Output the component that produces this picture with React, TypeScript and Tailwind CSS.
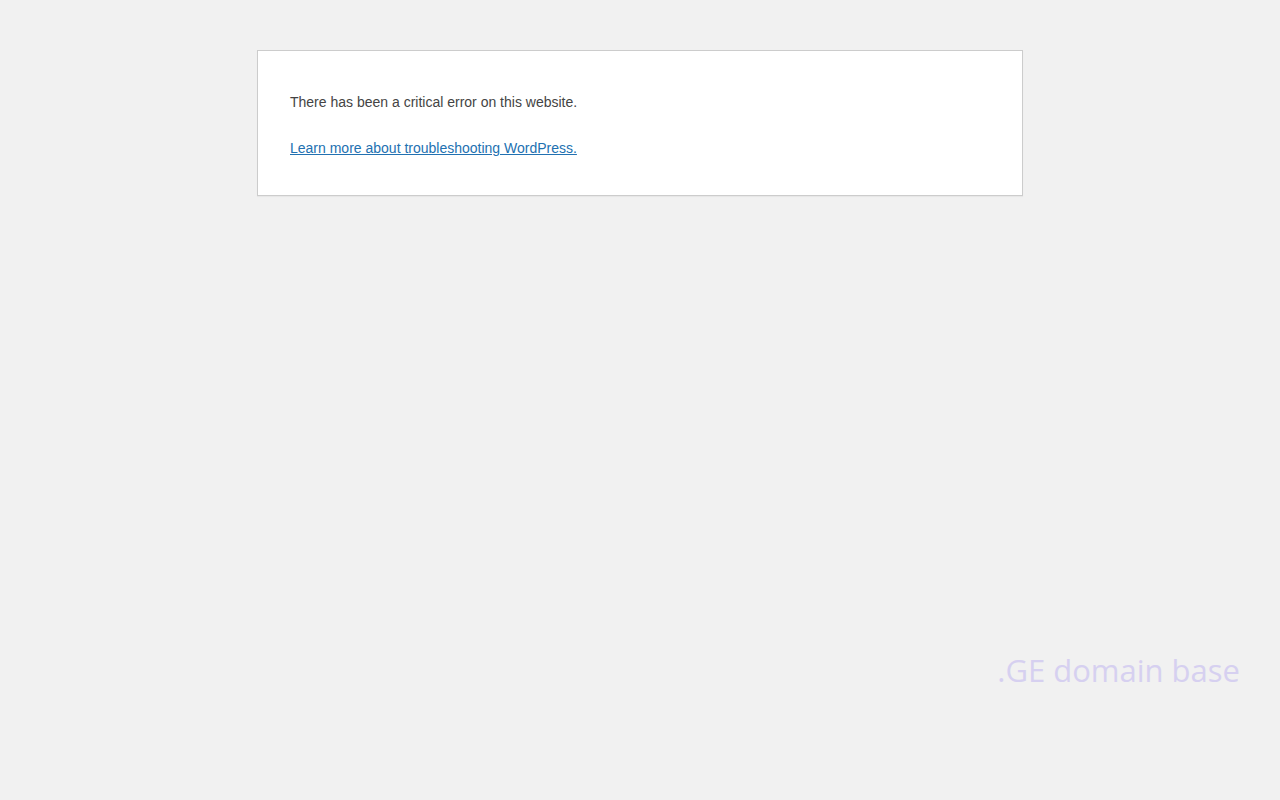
export default function App() {
  return (
    <div className="relative min-h-[800px] w-full bg-[#f1f1f1] pt-[50px] font-['Liberation_Sans',Arial,sans-serif]">
      <div className="mx-auto box-content max-w-[700px] border border-[#ccc] bg-white px-8 pb-[16px] pt-[14px] text-[14px] leading-[1.5] text-[#444] shadow-[0_1px_1px_rgba(0,0,0,0.04)]">
        <p className="mt-[27px]">There has been a critical error on this website.</p>
        <p className="mb-[20px] mt-[25px]">
          <a href="#" className="text-[#2271b1] underline">
            Learn more about troubleshooting WordPress.
          </a>
        </p>
      </div>
      <div className="absolute right-[40px] top-[649px] font-['Open_Sans',sans-serif] text-[31px] leading-[42px] text-[#d6d0f0]">
        .GE domain base
      </div>
    </div>
  );
}
